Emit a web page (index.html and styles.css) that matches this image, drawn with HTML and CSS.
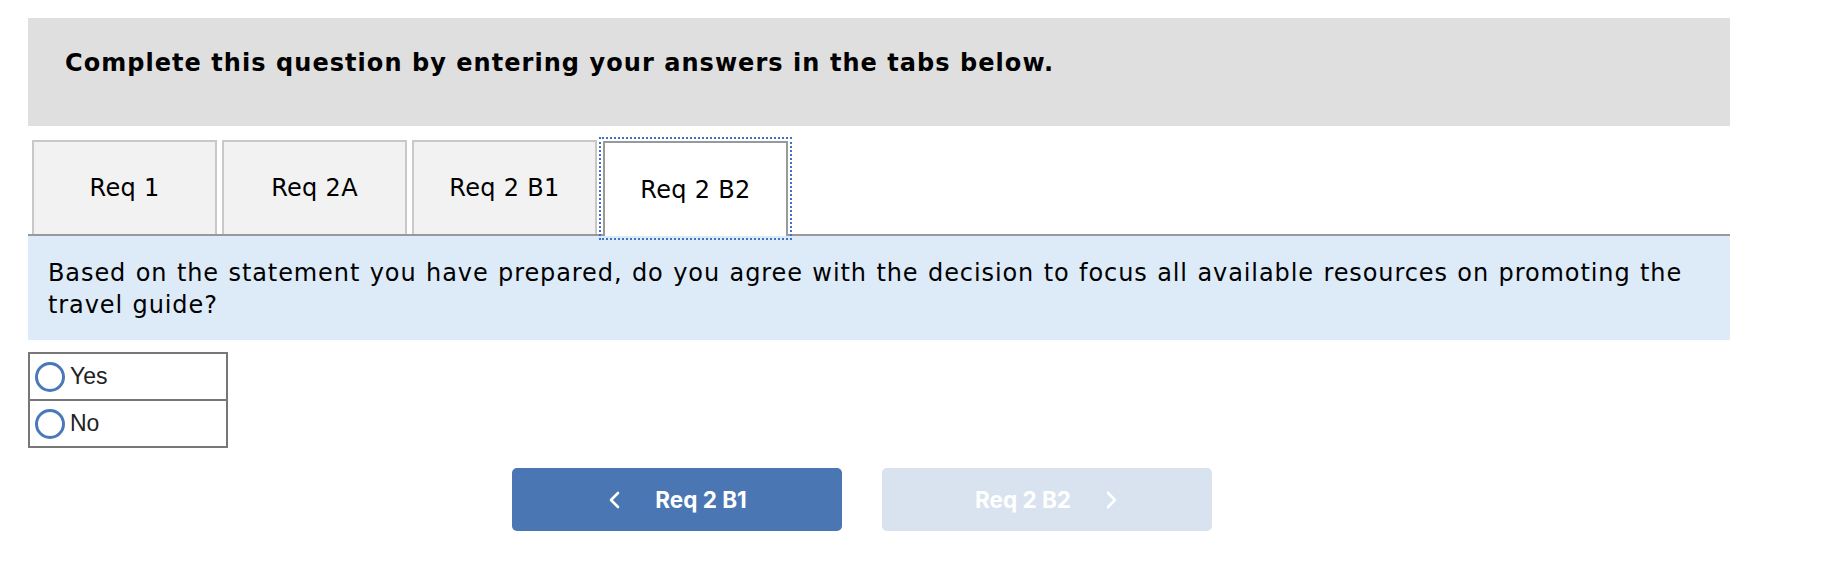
FILE: index.html
```html
<!DOCTYPE html>
<html lang="en">
<head>
<meta charset="utf-8">
<title>Question</title>
<link rel="stylesheet" href="styles.css">
</head>
<body>
<div class="page">
  <div class="instructions">Complete this question by entering your answers in the tabs below.</div>
  <div class="tabs">
    <div class="tab">Req 1</div>
    <div class="tab">Req 2A</div>
    <div class="tab">Req 2 B1</div>
    <div class="tab active">Req 2 B2</div>
  </div>
  <div class="question">Based on the statement you have prepared, do you agree with the decision to focus all available resources on promoting the travel guide?</div>
  <div class="choices">
    <label class="choice"><span class="radio"></span><span class="choice-label">Yes</span></label>
    <label class="choice"><span class="radio"></span><span class="choice-label">No</span></label>
  </div>
  <div class="nav">
    <button class="nav-btn prev"><svg class="chev" width="14" height="20" viewBox="0 0 14 20"><polyline points="11,3 4,10 11,17" fill="none" stroke="#fff" stroke-width="2.6" stroke-linecap="round" stroke-linejoin="round"/></svg><span>Req 2 B1</span></button>
    <button class="nav-btn next"><span>Req 2 B2</span><svg class="chev" width="14" height="20" viewBox="0 0 14 20"><polyline points="3,3 10,10 3,17" fill="none" stroke="#fff" stroke-width="2.6" stroke-linecap="round" stroke-linejoin="round"/></svg></button>
  </div>
</div>
</body>
</html>
```
FILE: styles.css
```css
body {
  margin: 0;
  background: #ffffff;
}

.page {
  margin-left: 28px;
  width: 1702px;
  padding-top: 18px;
}

.instructions {
  height: 108px;
  box-sizing: border-box;
  background: #dfdfdf;
  padding: 32px 0 0 37px;
  font-family: "DejaVu Sans", Verdana, sans-serif;
  font-weight: bold;
  font-size: 24px;
  line-height: 27px;
  letter-spacing: 1.05px;
  color: #000;
}

.tabs {
  display: flex;
  gap: 5px;
  margin-top: 14px;
  padding-left: 4px;
  height: 94px;
  border-bottom: 2px solid #999999;
}

.tab {
  width: 185px;
  box-sizing: border-box;
  border: 2px solid #c8c8c8;
  border-bottom: none;
  background: #f2f2f2;
  display: flex;
  align-items: center;
  justify-content: center;
  font-family: "DejaVu Sans", Verdana, sans-serif;
  font-size: 24px;
  letter-spacing: 0.3px;
  color: #000;
}

.tab.active {
  margin-left: 1px;
  margin-top: 1px;
  height: 95px;
  background: #ffffff;
  border-color: #999999;
  outline: 2px dotted #3f72c0;
  outline-offset: 2px;
}

.question {
  background: #ddebf8;
  padding: 21px 40px 19px 20px;
  font-family: "DejaVu Sans", Verdana, sans-serif;
  font-size: 24px;
  line-height: 32px;
  letter-spacing: 0.9px;
  word-spacing: 1px;
  color: #000;
}

.choices {
  margin-top: 12px;
  width: 200px;
  box-sizing: border-box;
  border: 2px solid #777777;
}

.choice {
  display: flex;
  align-items: center;
  height: 45px;
  padding-left: 5px;
}

.choice + .choice {
  border-top: 2px solid #777777;
}

.radio {
  width: 30px;
  height: 30px;
  box-sizing: border-box;
  border: 3.5px solid #4a78b8;
  border-radius: 50%;
  background: #fff;
}

.choice-label {
  margin-left: 5px;
  font-family: "Liberation Sans", Arial, sans-serif;
  font-size: 23px;
  color: #222;
}

.nav {
  display: flex;
  gap: 40px;
  margin-top: 20px;
  padding-left: 484px;
}

.nav-btn {
  width: 330px;
  height: 63px;
  border: none;
  border-radius: 5px;
  display: flex;
  align-items: center;
  justify-content: center;
  gap: 34px;
  font-family: Inter, "Liberation Sans", sans-serif;
  font-weight: 700;
  font-size: 22.5px;
  color: #ffffff;
  padding: 0;
}

.nav-btn.prev {
  background: #4a76b3;
}

.nav-btn.next {
  background: #d9e3ef;
}
```
